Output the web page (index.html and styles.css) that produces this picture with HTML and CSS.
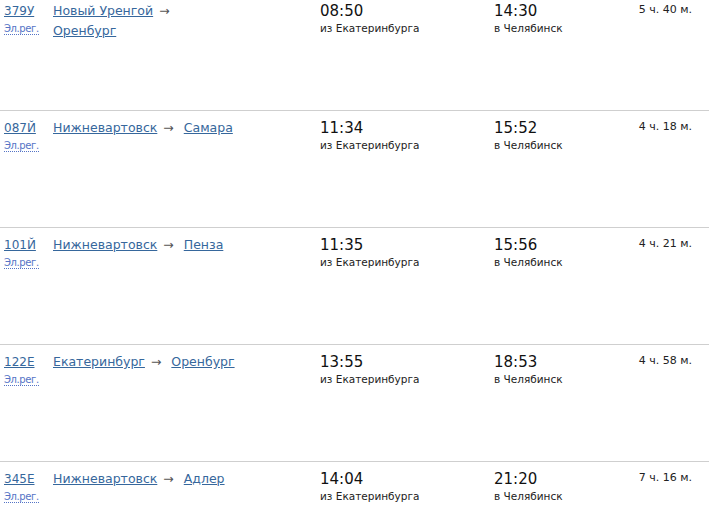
FILE: index.html
```html
<!DOCTYPE html>
<html lang="ru">
<head>
<meta charset="utf-8">
<title>Расписание</title>
<link rel="stylesheet" href="styles.css">
</head>
<body>
<div class="list">
  <div class="row">
    <div class="num"><a href="#" class="train">379У</a><span class="kind">Эл.рег.</span></div>
    <div class="route"><a href="#">Новый Уренгой</a> <span class="arrow">→</span>&nbsp; <a href="#">Оренбург</a></div>
    <div class="dep"><span class="time">08:50</span><span class="place">из Екатеринбурга</span></div>
    <div class="arr"><span class="time">14:30</span><span class="place">в Челябинск</span></div>
    <div class="dur">5 ч. 40 м.</div>
  </div>
  <div class="row">
    <div class="num"><a href="#" class="train">087Й</a><span class="kind">Эл.рег.</span></div>
    <div class="route"><a href="#">Нижневартовск</a> <span class="arrow">→</span>&nbsp; <a href="#">Самара</a></div>
    <div class="dep"><span class="time">11:34</span><span class="place">из Екатеринбурга</span></div>
    <div class="arr"><span class="time">15:52</span><span class="place">в Челябинск</span></div>
    <div class="dur">4 ч. 18 м.</div>
  </div>
  <div class="row">
    <div class="num"><a href="#" class="train">101Й</a><span class="kind">Эл.рег.</span></div>
    <div class="route"><a href="#">Нижневартовск</a> <span class="arrow">→</span>&nbsp; <a href="#">Пенза</a></div>
    <div class="dep"><span class="time">11:35</span><span class="place">из Екатеринбурга</span></div>
    <div class="arr"><span class="time">15:56</span><span class="place">в Челябинск</span></div>
    <div class="dur">4 ч. 21 м.</div>
  </div>
  <div class="row">
    <div class="num"><a href="#" class="train">122Е</a><span class="kind">Эл.рег.</span></div>
    <div class="route"><a href="#">Екатеринбург</a> <span class="arrow">→</span>&nbsp; <a href="#">Оренбург</a></div>
    <div class="dep"><span class="time">13:55</span><span class="place">из Екатеринбурга</span></div>
    <div class="arr"><span class="time">18:53</span><span class="place">в Челябинск</span></div>
    <div class="dur">4 ч. 58 м.</div>
  </div>
  <div class="row">
    <div class="num"><a href="#" class="train">345Е</a><span class="kind">Эл.рег.</span></div>
    <div class="route"><a href="#">Нижневартовск</a> <span class="arrow">→</span>&nbsp; <a href="#">Адлер</a></div>
    <div class="dep"><span class="time">14:04</span><span class="place">из Екатеринбурга</span></div>
    <div class="arr"><span class="time">21:20</span><span class="place">в Челябинск</span></div>
    <div class="dur">7 ч. 16 м.</div>
  </div>
</div>
</body>
</html>
```
FILE: styles.css
```css
html, body {
  margin: 0;
  padding: 0;
  background: #fff;
}
body {
  font-family: "DejaVu Sans", Verdana, sans-serif;
  color: #222;
  overflow: hidden;
  height: 531px;
}
.list {
  margin-top: -7px;
}
.row {
  display: grid;
  grid-template-columns: 49px 267px 174px 120px 78px;
  align-items: start;
  padding: 7px 0 0 4px;
  height: 109px;
  border-top: 1px solid #cfcfcf;
}
a {
  color: #36679c;
  text-decoration: underline;
}
.num {
  display: flex;
  flex-direction: column;
  align-items: flex-start;
}
.train {
  font-size: 12px;
  line-height: 20px;
}
.kind {
  font-size: 10px;
  line-height: 10px;
  letter-spacing: -0.4px;
  margin-top: 3px;
  color: #5574c6;
  border-bottom: 1px dotted #5574c6;
}
.route {
  font-size: 12.5px;
  line-height: 20px;
  max-width: 188px;
}
.arrow {
  color: #555;
  margin-left: 2px;
  margin-right: 2px;
}
.dep, .arr {
  display: flex;
  flex-direction: column;
  margin-top: 1px;
}
.time {
  font-size: 15px;
  line-height: 19px;
  color: #111;
}
.place {
  font-size: 10.5px;
  line-height: 14px;
  color: #222;
}
.dur {
  font-size: 11px;
  line-height: 17px;
  text-align: right;
  color: #222;
}
```
